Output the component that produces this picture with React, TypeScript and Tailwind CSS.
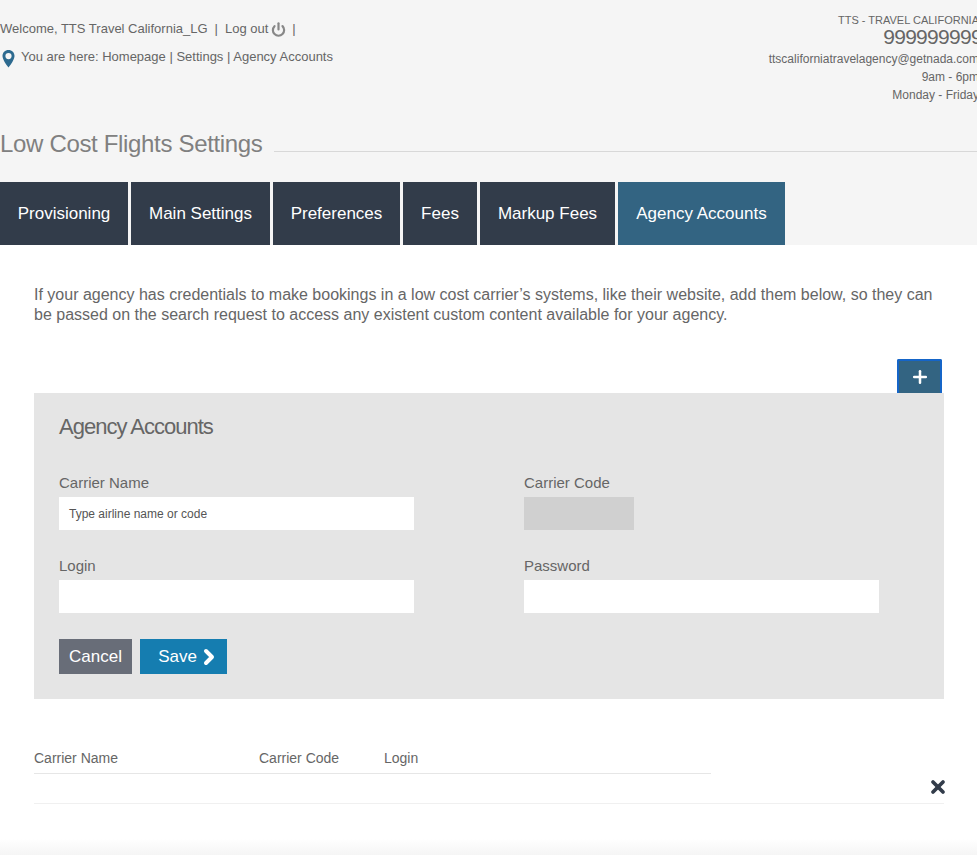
import React from 'react';
import { ChevronRight, Plus, Power, X } from 'lucide-react';

const tabs = [
  { label: 'Provisioning', width: 'w-[128px]' },
  { label: 'Main Settings', width: 'w-[139px]' },
  { label: 'Preferences', width: 'w-[127px]' },
  { label: 'Fees', width: 'w-[74px]' },
  { label: 'Markup Fees', width: 'w-[135px]' },
];

const Field = ({ label, width, placeholder, disabled }: { label: string; width: string; placeholder?: string; disabled?: boolean }) => (
  <div className="flex flex-col">
    <label className="text-[15px] leading-[16px] text-[#666] mb-[6px]">{label}</label>
    <div className={`${width} h-[33px] flex items-center px-[10px] text-[12px] text-[#555] ${disabled ? 'bg-[#d0d0d0]' : 'bg-white'}`}>
      {placeholder}
    </div>
  </div>
);

const App = () => {
  return (
    <div className="w-[977px] h-[855px] overflow-hidden bg-white font-['Liberation_Sans',Arial,sans-serif] relative">
      <div className="h-[245px] bg-[#f5f5f5] flex flex-col">
        <div className="h-[128px] flex justify-between">
          <div className="pt-[21px] text-[13px] text-[#666]">
            <div className="flex items-center h-[16px]">
              Welcome, TTS Travel California_LG
              <span className="ml-[7px] mr-[7px]">|</span>
              Log out
              <Power size={15} strokeWidth={3.5} className="ml-[3px] -mr-[1px] text-[#888]" />
              <span className="ml-[7px]">|</span>
            </div>
            <div className="flex items-center h-[16px] mt-[12px]">
              <svg width="13" height="18" viewBox="0 0 13 18" className="ml-[2px] mr-[6px] mt-[3px]">
                <path fillRule="evenodd" fill="#2d6a8f" d="M6.5 0C3 0 .5 2.6.5 6c0 3.4 3.6 8.6 6 11.5C8.900 14.600 12.500 9.400 12.500 6c0-3.400-2.500-6-6-6zm0 3a3 3 0 1 1 0 6.200 3 3 0 0 1 0-6.200z" />
              </svg>
              You are here: Homepage | Settings | Agency Accounts
            </div>
          </div>
          <div className="pt-[13px] -mr-[2px] text-right text-[12px] leading-[18px] text-[#666] whitespace-nowrap">
            <div className="text-[11px] leading-[14px]">TTS - TRAVEL CALIFORNIA</div>
            <div className="text-[21px] leading-[20px] tracking-[-0.7px] -mr-[3px] mb-[3px]">999999999</div>
            <div>ttscaliforniatravelagency@getnada.com</div>
            <div>9am - 6pm</div>
            <div>Monday - Friday</div>
          </div>
        </div>
        <div className="h-[54px] flex items-start">
          <h1 className="text-[24px] leading-[32px] font-normal tracking-[-0.33px] text-[#808080] whitespace-nowrap">Low Cost Flights Settings</h1>
          <div className="flex-1 ml-[11px] mt-[23px] border-t border-[#d8d8d8]" />
        </div>
        <div className="flex h-[63px] gap-[3px]">
          {tabs.map((tab) => (
            <div key={tab.label} className={`${tab.width} bg-[#323c4a] text-white text-[17px] flex items-center justify-center`}>
              {tab.label}
            </div>
          ))}
          <div className="w-[167px] bg-[#336482] text-white text-[17px] flex items-center justify-center">Agency Accounts</div>
        </div>
      </div>

      <div className="px-[34px] w-[944px] box-content">
        <p className="pt-[40px] w-[905px] text-[16px] leading-[19.5px] text-[#666]">
          If your agency has credentials to make bookings in a low cost carrier’s systems, like their website, add them below, so they can be passed on the search request to access any existent custom content available for your agency.
        </p>
        <div className="flex justify-end mt-[35px] w-[908px]">
          <button className="w-[45px] h-[34px] bg-[#336482] border-x-2 border-t-2 border-[#1565c8] rounded-t-[2px] flex items-center justify-center text-white">
            <Plus size={20} strokeWidth={3} />
          </button>
        </div>
        <div className="w-[910px] h-[306px] bg-[#e5e5e5] px-[25px] pt-[20px]">
          <h2 className="text-[22px] leading-[28px] font-normal tracking-[-1px] text-[#666]">Agency Accounts</h2>
          <div className="flex flex-col gap-[28px] mt-[34px]">
            <div className="flex gap-[110px]">
              <Field label="Carrier Name" width="w-[355px]" placeholder="Type airline name or code" />
              <Field label="Carrier Code" width="w-[110px]" disabled />
            </div>
            <div className="flex gap-[110px]">
              <Field label="Login" width="w-[355px]" />
              <Field label="Password" width="w-[355px]" />
            </div>
          </div>
          <div className="flex gap-[8px] mt-[26px]">
            <button className="w-[73px] h-[35px] bg-[#686d78] text-white text-[17px]">Cancel</button>
            <button className="w-[87px] h-[35px] bg-[#157db0] text-white text-[17px] pl-[8px] flex items-center justify-center">
              Save <ChevronRight size={24} strokeWidth={4} className="-mr-[4px]" />
            </button>
          </div>
        </div>
        <div className="mt-[50px] w-[677px] h-[25px] border-b border-[#e6e6e6] flex text-[14px] leading-[18px] text-[#666]">
          <span className="w-[225px]">Carrier Name</span>
          <span className="w-[125px]">Carrier Code</span>
          <span>Login</span>
        </div>
        <div className="w-[910px] h-[30px] border-b border-[#f0f0f0] flex justify-end items-start">
          <X size={20} strokeWidth={4.5} className="text-[#323c4a] mt-[3px] -mr-[4px]" />
        </div>
      </div>
      <div className="absolute left-0 right-0 bottom-0 h-[16px] bg-gradient-to-b from-white to-[#f5f5f5]" />
    </div>
  );
};

export default App;
